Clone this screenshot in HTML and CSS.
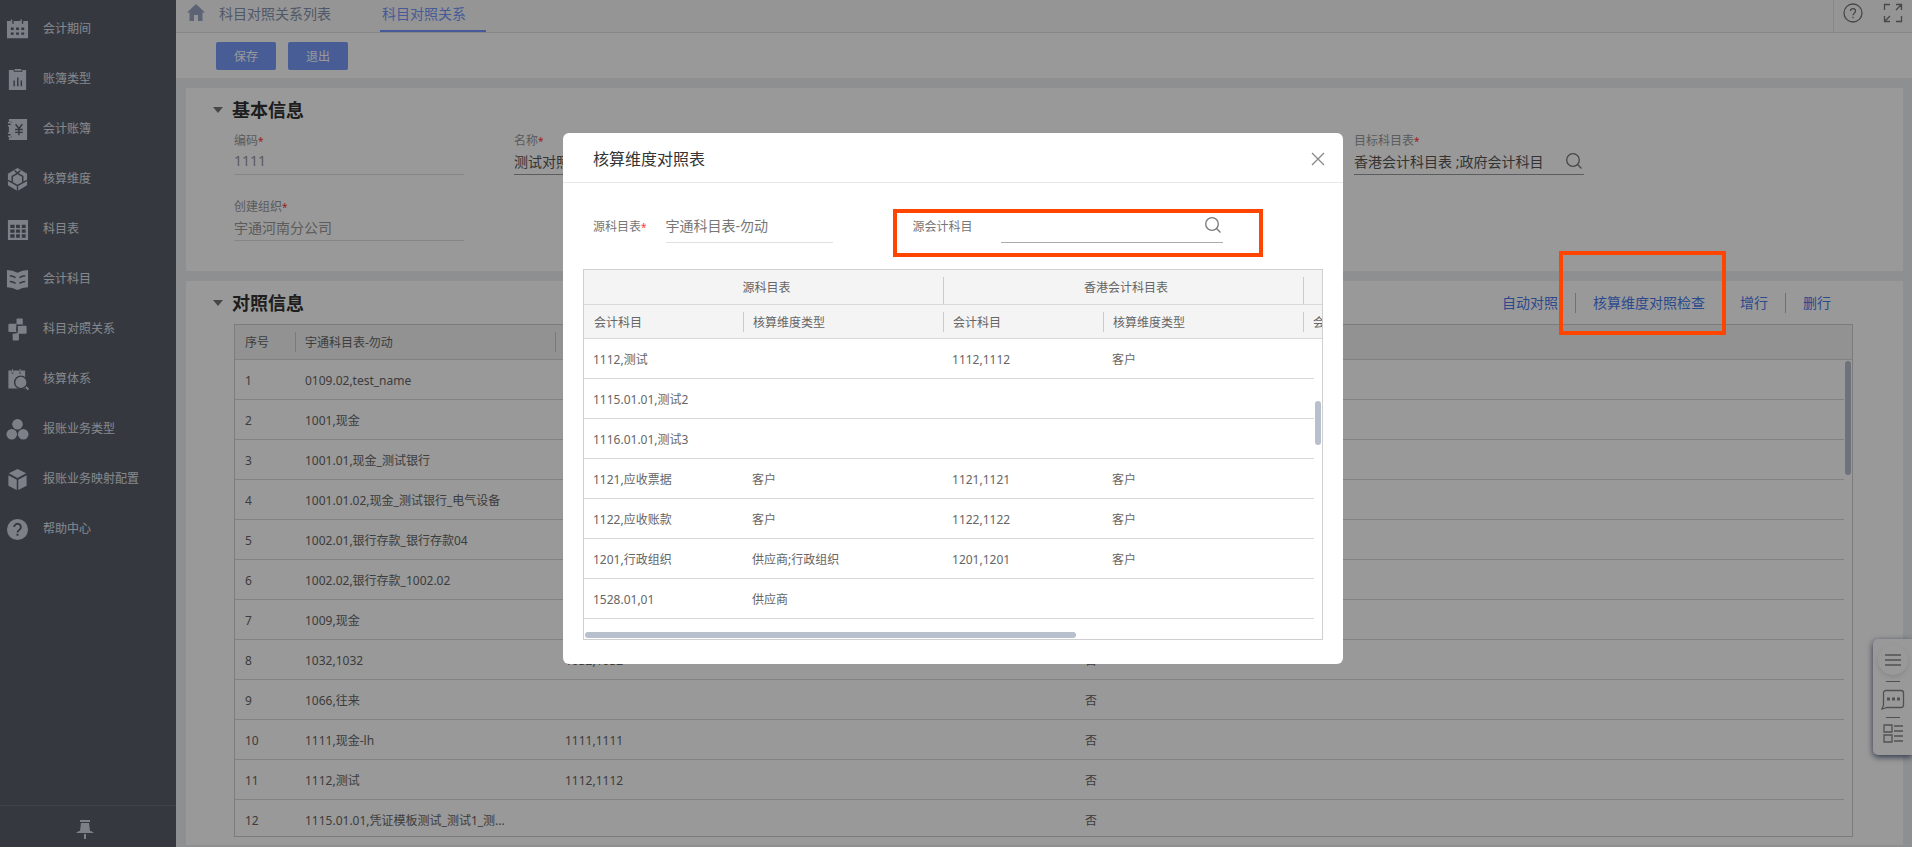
FILE: index.html
```html
<!DOCTYPE html>
<html lang="zh-CN">
<head>
<meta charset="utf-8">
<title>科目对照关系</title>
<link rel="stylesheet" href="styles.css">
</head>
<body>
<div class="app">
  <nav class="sidebar">
    <ul class="menu">
      <li><a class="menu-item" href="#"><svg class="menu-icon" viewBox="0 0 24 24"><path fill="currentColor" fill-rule="evenodd" d="M1 3h4V1.500h1.500V6H8V3h7V1.500h1.500V6H18V3h5v18H1zM5 10v2.500h3V10zm5.500 0v2.500h3V10zm5.500 0v2.500h3V10zM5 15v2.500h3V15zm5.500 0v2.500h3V15zm5.500 0v2.500h3V15z"/></svg>会计期间</a></li>
      <li><a class="menu-item" href="#"><svg class="menu-icon" viewBox="0 0 24 24"><path fill="currentColor" d="M3 2h5v2h9V2h4v21H3zM9 1h7v1.800H9z"/><path class="cut" d="M8.500 13v6M12.300 10v9M16 13v6"/></svg>账簿类型</a></li>
      <li><a class="menu-item" href="#"><svg class="menu-icon" viewBox="0 0 24 24"><path fill="currentColor" d="M3 1h19v22H3v-3h3v-4H3V8h3V4H3z"/><path d="M2 5h3q1.500 1.500 0 3H2M2 16h3q1.500 1.500 0 3H2" fill="none" stroke="currentColor" stroke-width="1.500"/><path class="cut" d="M10 6.500l3.500 4.500L17 6.500M9.500 12h8M9.500 15h8M13.500 11v7"/></svg>会计账簿</a></li>
      <li><a class="menu-item" href="#"><svg class="menu-icon" viewBox="0 0 24 24"><path fill="currentColor" d="M12 0l10 6v12l-10 6-10-6V6z"/><path class="cut" d="M12 5.500l5.500 3.200v6.600L12 18.500l-5.500-3.200V8.700zM12 5.500l-3-3M12 5.500l3-3M6.500 15.300L2 13M17.500 15.300L22 13M12 18.500V24"/></svg>核算维度</a></li>
      <li><a class="menu-item" href="#"><svg class="menu-icon" viewBox="0 0 24 24"><path fill="currentColor" fill-rule="evenodd" d="M2 2h21v21H2zM4.500 7v3.500H9V7zm6 0v3.500h4V7zm6 0v3.500h4V7zm-12 5v3.500H9V12zm6 0v3.500h4V12zm6 0v3.500h4V12zm-12 5v3.500H9V17zm6 0v3.500h4V17zm6 0v3.500h4V17z"/></svg>科目表</a></li>
      <li><a class="menu-item" href="#"><svg class="menu-icon" viewBox="0 0 24 24"><path fill="currentColor" d="M1 2q6 0 11 3 5-3 11-3v18q-6 0-11 3-5-3-11-3z"/><path class="cut" d="M4 8q3 0 6 2M4 14q3 0 6 2M20 8q-3 0-6 2M20 14q-3 0-6 2"/></svg>会计科目</a></li>
      <li><a class="menu-item" href="#"><svg class="menu-icon" viewBox="0 0 24 24"><g fill="currentColor"><rect x="11" y="0.500" width="6.500" height="6.500" rx="1"/><rect x="2.500" y="6" width="8.500" height="8.500" rx="1"/><rect x="12" y="8" width="9.500" height="8.500" rx="1"/><path d="M10 6h7v3h-7zM8 13.500h5V17H8z"/><rect x="7" y="16" width="6.500" height="7.500" rx="1"/></g><path class="cut" d="M11.500 6.500v9M12 7.500h5M7 15.300h4"/></svg>科目对照关系</a></li>
      <li><a class="menu-item" href="#"><svg class="menu-icon" viewBox="0 0 24 24"><path fill="currentColor" d="M2.500 2.500H6V6h1.500V2.500H14V6h1.500V2.500H20v19H2.500zM6.300 1h1v4h-1zM14.300 1h1v4h-1z"/><path d="M18.500 17.500l5 5" stroke="currentColor" stroke-width="2"/><circle cx="15.500" cy="15" r="6.500" fill="currentColor" class="disc"/></svg>核算体系</a></li>
      <li><a class="menu-item" href="#"><svg class="menu-icon" viewBox="0 0 24 24"><g fill="currentColor"><circle cx="12" cy="6.500" r="5.500"/><circle cx="6" cy="17" r="5.500"/><circle cx="18" cy="17" r="5.500"/></g></svg>报账业务类型</a></li>
      <li><a class="menu-item" href="#"><svg class="menu-icon" viewBox="0 0 24 24"><path fill="currentColor" d="M12 1l9 4.500-9 5-9-5zM2.500 7.500l8.700 4.800V23l-8.700-4.500zM21.500 7.500l-8.700 4.800V23l8.700-4.500z"/></svg>报账业务映射配置</a></li>
      <li><a class="menu-item" href="#"><svg class="menu-icon" viewBox="0 0 24 24"><circle cx="12" cy="12" r="11" fill="currentColor"/><path class="cut thick" d="M8.500 9.500a3.500 3.500 0 1 1 5.300 3q-1.800 1-1.800 2.500M12 16.500v2"/></svg>帮助中心</a></li>
    </ul>
    <button class="pin" type="button" aria-label="固定菜单"><svg width="18" height="20" viewBox="0 0 18 20"><path fill="currentColor" d="M4 0h10v2H4zM5 3h8l1 8h1l3 2H0l3-2h1zM8 14h2v5H8z"/></svg></button>
  </nav>

  <main class="main">
    <header class="tabs">
      <a class="home" href="#" aria-label="首页"><svg width="18" height="17" viewBox="0 0 18 17"><path fill="currentColor" d="M9 0l9 8.500h-2.500V17H11v-6H7v6H2.500V8.500H0z"/></svg></a>
      <a class="tab" href="#">科目对照关系列表</a>
      <a class="tab active" href="#">科目对照关系</a>
      <div class="tab-tools">
        <button type="button" aria-label="帮助"><svg width="20" height="20" viewBox="0 0 20 20" class="line"><circle cx="10" cy="10" r="9"/><path d="M7.500 8a2.500 2.500 0 1 1 3.800 2.200Q10 11 10 12.300M10 13.800v1.500"/></svg></button>
        <button type="button" aria-label="全屏"><svg width="20" height="20" viewBox="0 0 20 20" class="line"><path d="M1.500 7V1.500H7M13 1.500h5.500V7M18 2l-5 5M18.500 13v5.500H13M7 18.500H1.500V13M2 18l5-5"/></svg></button>
      </div>
    </header>
    <div class="toolbar">
      <button class="primary" type="button">保存</button>
      <button class="primary" type="button">退出</button>
    </div>

    <div class="content">
      <section class="card">
        <div class="card-head"><span class="arrow"></span><h2>基本信息</h2></div>
        <form class="fields">
          <div class="field"><label for="code">编码<em>*</em></label><div class="box"><input id="code" value="1111" readonly></div></div>
          <div class="field edit"><label for="name">名称<em>*</em></label><div class="box"><input id="name" value="测试对照"></div></div>
          <div class="field edit last"><label for="target">目标科目表<em>*</em></label><div class="box"><input id="target" value="香港会计科目表 ;政府会计科目"><svg class="line lens" width="16" height="16" viewBox="0 0 16 16"><circle cx="7" cy="7" r="6.300"/><path d="M11.500 11.500l4 4"/></svg></div></div>
          <div class="field"><label for="org">创建组织<em>*</em></label><div class="box"><input id="org" value="宇通河南分公司" readonly></div></div>
        </form>
      </section>

      <section class="card grow">
        <div class="card-head"><span class="arrow"></span><h2>对照信息</h2>
          <div class="actions"><a href="#">自动对照</a><a href="#">核算维度对照检查</a><a href="#">增行</a><a href="#">删行</a></div>
        </div>
        <div class="grid-frame page-grid">
          <table class="grid">
            <colgroup><col class="w60"><col class="w260"><col class="w260"><col class="w260"><col></colgroup>
            <thead><tr><th>序号</th><th>宇通科目表-勿动</th><th>香港会计科目表</th><th>政府会计科目</th><th></th></tr></thead>
            <tbody>
              <tr><td>1</td><td>0109.02,test_name</td><td></td><td></td><td>否</td></tr>
              <tr><td>2</td><td>1001,现金</td><td></td><td></td><td>否</td></tr>
              <tr><td>3</td><td>1001.01,现金_测试银行</td><td></td><td></td><td>否</td></tr>
              <tr><td>4</td><td>1001.01.02,现金_测试银行_电气设备</td><td></td><td></td><td>否</td></tr>
              <tr><td>5</td><td>1002.01,银行存款_银行存款04</td><td></td><td></td><td>否</td></tr>
              <tr><td>6</td><td>1002.02,银行存款_1002.02</td><td></td><td></td><td>否</td></tr>
              <tr><td>7</td><td>1009,现金</td><td></td><td></td><td>否</td></tr>
              <tr><td>8</td><td>1032,1032</td><td>1032,1032</td><td></td><td>否</td></tr>
              <tr><td>9</td><td>1066,往来</td><td></td><td></td><td>否</td></tr>
              <tr><td>10</td><td>1111,现金-lh</td><td>1111,1111</td><td></td><td>否</td></tr>
              <tr><td>11</td><td>1112,测试</td><td>1112,1112</td><td></td><td>否</td></tr>
              <tr><td>12</td><td>1115.01.01,凭证模板测试_测试1_测...</td><td></td><td></td><td>否</td></tr>
            </tbody>
          </table>
          <div class="gutter"><span class="thumb"></span></div>
        </div>
      </section>
    </div>
  </main>

  <aside class="dock">
    <button class="round" type="button" aria-label="菜单"><svg width="16" height="12" viewBox="0 0 16 12" class="line"><path d="M0 1h16M0 6h16M0 11h16"/></svg></button>
    <hr>
    <button type="button" aria-label="消息"><svg width="24" height="22" viewBox="0 0 24 22" class="line"><path d="M5 1.500h15a2.500 2.500 0 0 1 2.500 2.500v12a2.500 2.500 0 0 1-2.500 2.500H6L1 20l1.500-4V4A2.500 2.500 0 0 1 5 1.500z"/><path stroke-width="3" d="M6 10h3M11 10h3M16 10h3"/></svg></button>
    <hr>
    <button type="button" aria-label="列表"><svg width="20" height="19" viewBox="0 0 20 19" class="line"><path d="M1 1h8v7H1zM1 11h8v7H1zM11 2h9M11 7h9M11 12h9M11 17h9"/></svg></button>
  </aside>
</div>

<div class="mask">
  <div class="mark mark-action"></div>
  <div class="modal" role="dialog" aria-labelledby="dialog-title">
    <header class="modal-head"><h3 id="dialog-title">核算维度对照表</h3><button type="button" aria-label="关闭"><svg width="14" height="14" viewBox="0 0 14 14" class="line"><path d="M1 1l12 12M13 1L1 13"/></svg></button></header>
    <form class="filters">
      <label for="source">源科目表<em>*</em></label>
      <div class="box source"><input id="source" value="宇通科目表-勿动" readonly></div>
      <div class="query">
        <label for="subject">源会计科目</label>
        <div class="box subject"><input id="subject" value=""><svg class="line" width="16" height="16" viewBox="0 0 16 16"><circle cx="7" cy="7" r="6.300"/><path d="M11.500 11.500l4 4"/></svg></div>
        <div class="mark mark-query"></div>
      </div>
    </form>
    <div class="grid-frame modal-grid">
      <table class="grid">
        <colgroup><col class="w159"><col class="w200"><col class="w160"><col class="w200"><col></colgroup>
        <thead>
          <tr class="groups"><th colspan="2">源科目表</th><th colspan="2">香港会计科目表</th><th></th></tr>
          <tr><th>会计科目</th><th>核算维度类型</th><th>会计科目</th><th>核算维度类型</th><th>会计科目</th></tr>
        </thead>
        <tbody>
          <tr><td>1112,测试</td><td></td><td>1112,1112</td><td>客户</td><td></td></tr>
          <tr><td>1115.01.01,测试2</td><td></td><td></td><td></td><td></td></tr>
          <tr><td>1116.01.01,测试3</td><td></td><td></td><td></td><td></td></tr>
          <tr><td>1121,应收票据</td><td>客户</td><td>1121,1121</td><td>客户</td><td></td></tr>
          <tr><td>1122,应收账款</td><td>客户</td><td>1122,1122</td><td>客户</td><td></td></tr>
          <tr><td>1201,行政组织</td><td>供应商;行政组织</td><td>1201,1201</td><td>客户</td><td></td></tr>
          <tr><td>1528.01,01</td><td>供应商</td><td></td><td></td><td></td></tr>
        </tbody>
      </table>
      <div class="gutter"><span class="thumb"></span></div>
      <span class="thumb-x"></span>
    </div>
  </div>
</div>
</body>
</html>
```
FILE: styles.css
```css
* { box-sizing: border-box; }
body { margin: 0; font: 12px/20px "Noto Sans", "Noto Sans CJK SC", sans-serif; color: #666; }
a { color: inherit; text-decoration: none; }
button, input { font: inherit; color: inherit; border: 0; padding: 0; background: none; }
h2, h3, ul { margin: 0; padding: 0; list-style: none; }
svg { display: block; flex: none; }
em { color: #f33; font-style: normal; font-size: 10px; }
.line { fill: none; stroke: currentColor; stroke-width: 1.3; }

.app { display: flex; height: 100vh; overflow: hidden; background: #eceef2; }

/* sidebar */
.sidebar { flex: none; width: 176px; display: flex; flex-direction: column; background: #5a5e6b; color: #dfe2e9; }
.menu { flex: 1; padding-top: 4px; }
.menu-item { display: flex; align-items: center; gap: 14px; height: 50px; padding-left: 6px; }
.menu-icon { width: 23px; height: 23px; color: #d0d6e2; }
.cut { fill: none; stroke: #5a5e6b; stroke-width: 1.5; }
.disc { stroke: #5a5e6b; stroke-width: 1.5; }
.thick { stroke-width: 2; }
.pin { height: 42px; padding: 6px 0 0 76px; border-top: 1px solid #6b6e7c; color: #d0d6e2; }

/* main column */
.main { flex: 1; min-width: 0; display: flex; flex-direction: column; }
.tabs { flex: none; display: flex; height: 33px; padding: 0 9px 0 11px; background: #f9f9f9; border-bottom: 1px solid #e2e2e2; font-size: 14px; color: #8592ad; }
.home { padding-top: 4px; color: #99a5c4; margin-right: 12px; }
.tab { padding: 4px 0 6px 2px; margin-right: 49px; }
.tab.active { width: 106px; margin: 0; color: #7397fa; border-bottom: 2px solid #7397fa; }
.tab-tools { display: flex; align-items: flex-start; gap: 20px; margin-left: auto; padding: 3px 0 0 9px; border-left: 1px solid #e2e2e2; color: #777; }
.toolbar { flex: none; display: flex; gap: 12px; padding: 9px 40px 8px; background: #fff; }
.primary { width: 60px; height: 28px; padding-top: 1px; border-radius: 2px; background: #789bfa; color: #fff; }
.content { flex: 1; min-height: 0; display: flex; flex-direction: column; gap: 10px; padding: 10px 9px 2px 10px; }

.card { background: #fff; padding: 0 50px 0 27px; }
.card-head { display: flex; align-items: center; height: 43px; }
.card-head h2 { margin-left: 9px; font-size: 18px; line-height: 24px; color: #333; }
.arrow { border: 5px solid transparent; border-top: 6px solid #777; border-bottom: 0; }
.fields { display: grid; grid-template-columns: repeat(5, 230px); column-gap: 50px; padding: 0 0 22px 21px; }
.field { height: 66px; color: #999; padding-bottom: 22px; }
.field label { display: block; height: 18px; }
.field.edit .box { color: #555; border-color: #999; }
.field.last { grid-column: 5; }
.fields .field:nth-child(4) { height: 52px; padding-bottom: 0; }
.box { display: flex; align-items: center; height: 26px; padding: 0 2px 2px 0; border-bottom: 1px solid #e0e0e0; font-size: 14px; }
.box input { flex: 1; min-width: 0; height: 22px; outline: none; }
.lens { color: #777; }

.grow { flex: 1; min-height: 0; display: flex; flex-direction: column; padding-bottom: 8px; }
.grow .card-head { flex: none; }
.actions { display: flex; margin-left: auto; padding-right: 5px; font-size: 14px; color: #4b7bec; }
.actions a { padding: 0 17px; }
.actions a + a { border-left: 1px solid #bbb; }

/* data grids */
.grid-frame { position: relative; overflow: hidden; border: 1px solid #cfcfcf; background: #fff; }
.page-grid { flex: 1; min-height: 0; margin-left: 21px; }
.grid { width: 100%; table-layout: fixed; border-collapse: separate; border-spacing: 0; }
.grid th, .grid td { padding: 2px 0 0 10px; text-align: left; font-weight: 400; white-space: nowrap; border-bottom: 1px solid #d9d9d9; }
.grid td { height: 40px; }
.grid th { position: relative; height: 35px; background: #f4f4f4; }
.grid th + th::before { content: ""; position: absolute; left: 0; top: 7px; height: 20px; border-left: 1px solid #c8ccd2; }
.grid .groups th { text-align: center; padding: 2px 0 0 6px; }
.grid .groups th + th::before { height: 27px; }
.grid .groups + tr th { height: 34px; }
.w60 { width: 60px; }
.w159 { width: 159px; }
.w160 { width: 160px; }
.w200 { width: 200px; }
.w260 { width: 260px; }
.gutter { position: absolute; right: 0; top: 35px; bottom: 0; width: 8px; background: #fff; }
.thumb { display: block; width: 6px; height: 114px; margin: 1px 0 0 1px; border-radius: 3px; background: #b8c0cd; }

/* floating dock on the right edge */
.dock { position: fixed; right: 0; bottom: 92px; width: 39px; height: 116px; display: flex; flex-direction: column; align-items: center; justify-content: space-between; padding: 6px 0 12px; border-radius: 5px 0 0 5px; background: #fff; color: #888; box-shadow: 0 2px 6px #4c5878; }
.dock hr { width: 14px; margin: 0; border: 0; border-top: 1px solid #888; }
.round { width: 30px; height: 30px; border-radius: 50%; display: flex; align-items: center; justify-content: center; box-shadow: 0 2px 5px #e2e2e2; }

/* dialog */
.mask { position: fixed; inset: 0; display: flex; justify-content: center; align-items: flex-start; padding: 133px 6px 0 0; background: rgba(0, 0, 0, .4); }
.modal { width: 780px; padding-bottom: 24px; border-radius: 6px; background: #fff; }
.modal-head { display: flex; align-items: center; justify-content: space-between; height: 50px; padding: 2px 18px 0 30px; border-bottom: 1px solid #e8e8e8; color: #888; }
.modal-head h3 { font-size: 16px; font-weight: 400; color: #333; }
.filters { display: flex; align-items: center; height: 86px; padding: 0 30px; color: #777; }
.filters .box { height: 34px; }
.filters label { padding-top: 2px; }
.source { width: 167px; margin-left: 19px; }
.query { position: relative; display: flex; align-items: center; margin-left: 80px; }
.subject { width: 222px; margin-left: 28px; }
.filters .subject { border-color: #aaa; }
.modal-grid { height: 371px; margin: 0 20px; }
.modal-grid .grid { width: 880px; }
.modal-grid td { padding-left: 9px; }
.modal-grid .gutter { top: 69px; }
.modal-grid .thumb { height: 44px; margin-top: 62px; }
.thumb-x { position: absolute; left: 1px; bottom: 1px; width: 491px; height: 6px; border-radius: 3px; background: #b8c0cd; }
.mark { position: absolute; border: 4px solid #ff4500; pointer-events: none; }
.mark-action { top: 251px; right: 186px; width: 167px; height: 84px; }
.mark-query { inset: 0 -40px -14px -20px; }
```
